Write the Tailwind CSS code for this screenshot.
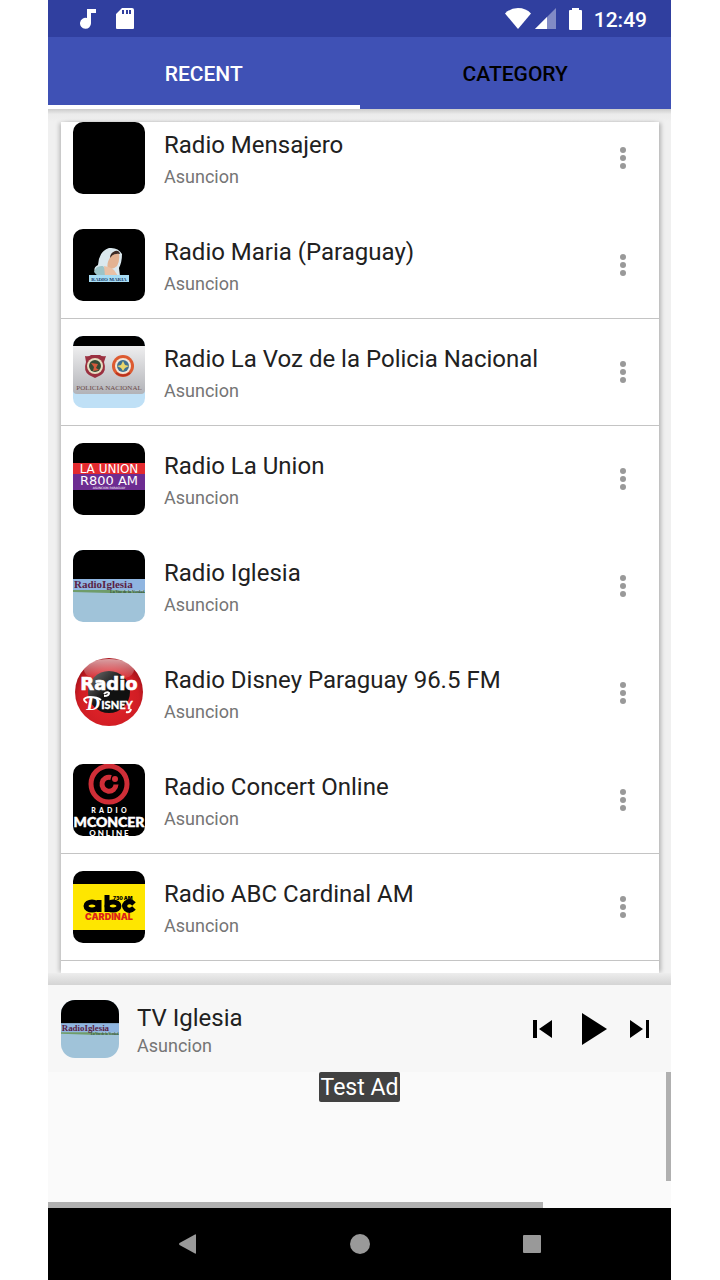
<!DOCTYPE html>
<html lang="en">
<head>
  <meta charset="UTF-8">
  <meta name="viewport" content="width=device-width, initial-scale=1.0">
  <title>Radio Paraguay</title>
  <script src="https://cdn.jsdelivr.net/npm/@tailwindcss/browser@4"></script>
</head>
<body class="bg-white font-['Roboto',sans-serif] text-[#212121]">

  <!-- Shared drawings -->
  <svg class="hidden">
    <symbol id="dots" viewBox="0 0 6 22">
      <circle cx="3" cy="3" r="3"/><circle cx="3" cy="11" r="3"/><circle cx="3" cy="19" r="3"/>
    </symbol>
    <symbol id="iglesia" viewBox="0 0 72 72">
      <rect width="72" height="72" fill="#a0c3d9"/>
      <rect width="72" height="29" fill="#000"/>
      <rect y="29" width="72" height="11" fill="#8fb5e0"/>
      <path d="M0 40h36l36 2v1H36L0 42z" fill="#6f9c6a"/>
      <text x="1" y="38" font-family="Liberation Serif, serif" font-weight="700" font-size="11" fill="#5a1f45">RadioIglesia</text>
      <text x="37" y="43" font-family="Liberation Serif, serif" font-weight="700" font-size="4" fill="#33553f">La Voz de la Verdad</text>
    </symbol>
  </svg>

  <div class="min-h-screen flex flex-col pl-12 pr-[49px]">

    <!-- Status bar -->
    <div class="h-[37px] bg-[#303f9f] flex items-center pl-8 pr-6 text-white">
      <svg class="w-4 h-5" viewBox="0 0 16 20" fill="currentColor"><path d="M7 0h9v4h-5v10a5.500 5.500 0 1 1-4-5z"/></svg>
      <svg class="w-[18px] h-[21px] ml-5" viewBox="0 0 18 21" fill="currentColor"><path fill-rule="evenodd" d="M6 0h10a2 2 0 0 1 2 2v18a1 1 0 0 1-1 1H1a1 1 0 0 1-1-1V6zM6 2v4h2V2zM10 2v4h2V2zM13 2v4h2V2z"/></svg>
      <svg class="w-[26px] h-[21px] ml-auto" viewBox="0 0 26 21" fill="currentColor"><path d="M13 21L0 5.500Q5 0 13 0t13 5.500z"/></svg>
      <svg class="w-[21px] h-[21px] ml-1" viewBox="0 0 21 21" fill="currentColor"><path d="M0 21L21 0v21z" opacity=".4"/><path d="M0 21L12 9v12z"/></svg>
      <svg class="w-[13px] h-[22px] ml-[13px]" viewBox="0 0 13 22" fill="currentColor"><path d="M3 2V0h7v2h2q1 0 1 1v18q0 1-1 1H1q-1 0-1-1V3q0-1 1-1z"/></svg>
      <span class="ml-3 pt-[2px] text-[21px] leading-6 font-medium">12:49</span>
    </div>

    <!-- Tabs -->
    <div class="h-[72px] bg-[#3f51b5] grid grid-cols-2 text-[21px] font-medium">
      <button class="text-white border-b-4 border-white pt-2">RECENT</button>
      <button class="text-black border-b-4 border-transparent pt-2">CATEGORY</button>
    </div>

    <!-- Stations -->
    <main class="flex-1 bg-[#f0f0f0] pl-[13px] pr-3 flex flex-col">
      <div class="h-[13px] -ml-[13px] -mr-3 bg-linear-to-b from-[#cccccc] via-[#ebebeb] via-40% to-[#f0f0f0]"></div>
      <ul class="flex-1 bg-white shadow-[3px_0_4px_-1px_rgba(0,0,0,0.25),-3px_0_4px_-1px_rgba(0,0,0,0.2)]">
        <li class="h-[90px] pl-3 pr-3 flex items-start gap-[19px]">
          <div class="size-[72px] shrink-0 rounded-[10px] bg-black"></div>
          <div class="flex-1 pt-[7px]">
            <h2 class="text-[24px] leading-8">Radio Mensajero</h2>
            <p class="mt-1 text-[18px] leading-6 text-[#757575]">Asuncion</p>
          </div>
          <button aria-label="More" class="w-12 h-[72px] flex items-center justify-center text-[#999]"><svg class="w-[6px] h-[22px]" fill="currentColor"><use href="#dots"/></svg></button>
        </li>
        <li class="h-[107px] pt-[17px] pl-3 pr-3 flex items-start gap-[19px] border-b border-[#c4c4c4]">
          <svg class="size-[72px] shrink-0 rounded-[10px]" viewBox="0 0 72 72">
            <rect width="72" height="72" fill="#000"/>
            <path d="M23 45q-4-6 2-9 1-14 11-17 9-1 13 6 0 8-3 14l1 8H26z" fill="#dbe8ee"/>
            <path d="M21 43q2-7 9-6l8 10H25z" fill="#9cc4c8"/>
            <path d="M38 27q4-4 8-2 1 7-2 12-4 4-9 3-2-6 3-13z" fill="#e3b292"/>
            <path d="M37 29q3-5 10-4-1-4-5-3-5 2-5 7z" fill="#3d2b25"/>
            <path d="M31 37q7 1 10 4l4 6H32z" fill="#e9c0a5"/>
            <rect x="16" y="46" width="40" height="7" fill="#a7dcf4"/>
            <text x="36" y="52" text-anchor="middle" font-family="Liberation Serif, serif" font-weight="700" font-size="5" fill="#173a66">RADIO MARIA</text>
          </svg>
          <div class="flex-1 pt-[7px]">
            <h2 class="text-[24px] leading-8">Radio Maria (Paraguay)</h2>
            <p class="mt-1 text-[18px] leading-6 text-[#757575]">Asuncion</p>
          </div>
          <button aria-label="More" class="w-12 h-[72px] flex items-center justify-center text-[#999]"><svg class="w-[6px] h-[22px]" fill="currentColor"><use href="#dots"/></svg></button>
        </li>
        <li class="h-[107px] pt-[17px] pl-3 pr-3 flex items-start gap-[19px] border-b border-[#c4c4c4]">
          <svg class="size-[72px] shrink-0 rounded-[10px]" viewBox="0 0 72 72">
            <defs><linearGradient id="steel" x1="0" y1="0" x2="0" y2="1"><stop offset="0" stop-color="#eeeeef"/><stop offset="1" stop-color="#b2b3b8"/></linearGradient></defs>
            <rect width="72" height="72" fill="#bfe0f6"/>
            <path d="M0 10h72v44q0 4-4 4H4q-4 0-4-4z" fill="url(#steel)"/>
            <rect width="72" height="10" fill="#000"/>
            <path d="M12 20q4 1 6-1h9q2 2 6 1l-2 6q3 9-3 13l-6 3-6-3q-6-4-3-13z" fill="#9b3040"/>
            <circle cx="22" cy="30" r="8" fill="#e6ddc0"/><circle cx="22" cy="30" r="6" fill="#354b35"/>
            <path d="M18 27l7 1-2 4 3 2-6 1 1-4z" fill="#d45b3c"/>
            <circle cx="50" cy="30" r="11" fill="#dd5a30"/><circle cx="50" cy="30" r="8" fill="#f1e7da"/><circle cx="50" cy="30" r="6" fill="#3f7191"/>
            <path d="M50 25l2 4 4 1-4 2-2 3-2-3-4-2 4-1z" fill="#e9d66c"/>
            <path d="M43 37q7 5 14 0" fill="none" stroke="#b8321f" stroke-width="2"/>
            <text x="36" y="54" text-anchor="middle" font-family="Liberation Serif, serif" font-size="7" fill="#6b4b48">POLICIA NACIONAL</text>
          </svg>
          <div class="flex-1 pt-[7px]">
            <h2 class="text-[24px] leading-8">Radio La Voz de la Policia Nacional</h2>
            <p class="mt-1 text-[18px] leading-6 text-[#757575]">Asuncion</p>
          </div>
          <button aria-label="More" class="w-12 h-[72px] flex items-center justify-center text-[#999]"><svg class="w-[6px] h-[22px]" fill="currentColor"><use href="#dots"/></svg></button>
        </li>
        <li class="h-[107px] pt-[17px] pl-3 pr-3 flex items-start gap-[19px]">
          <svg class="size-[72px] shrink-0 rounded-[10px]" viewBox="0 0 72 72">
            <rect width="72" height="72" fill="#000"/>
            <rect y="20" width="72" height="11" fill="#e32a2e"/>
            <rect y="31" width="72" height="16" fill="#6d2c91"/>
            <g text-anchor="middle" font-family="DejaVu Sans, sans-serif" fill="#fff">
              <text x="36" y="30" font-size="12">LA UNION</text>
              <text x="36" y="42" font-size="13">R800 AM</text>
              <text x="36" y="46" font-size="3">ASUNCION PARAGUAY</text>
            </g>
          </svg>
          <div class="flex-1 pt-[7px]">
            <h2 class="text-[24px] leading-8">Radio La Union</h2>
            <p class="mt-1 text-[18px] leading-6 text-[#757575]">Asuncion</p>
          </div>
          <button aria-label="More" class="w-12 h-[72px] flex items-center justify-center text-[#999]"><svg class="w-[6px] h-[22px]" fill="currentColor"><use href="#dots"/></svg></button>
        </li>
        <li class="h-[107px] pt-[17px] pl-3 pr-3 flex items-start gap-[19px]">
          <svg class="size-[72px] shrink-0 rounded-[10px]"><use href="#iglesia"/></svg>
          <div class="flex-1 pt-[7px]">
            <h2 class="text-[24px] leading-8">Radio Iglesia</h2>
            <p class="mt-1 text-[18px] leading-6 text-[#757575]">Asuncion</p>
          </div>
          <button aria-label="More" class="w-12 h-[72px] flex items-center justify-center text-[#999]"><svg class="w-[6px] h-[22px]" fill="currentColor"><use href="#dots"/></svg></button>
        </li>
        <li class="h-[107px] pt-[17px] pl-3 pr-3 flex items-start gap-[19px]">
          <svg class="size-[72px] shrink-0" viewBox="0 0 72 72">
            <defs>
              <radialGradient id="ball" cx=".5" cy=".6" r=".55"><stop offset="0" stop-color="#e8252b"/><stop offset=".8" stop-color="#d01d24"/><stop offset="1" stop-color="#a9131b"/></radialGradient>
              <linearGradient id="shine" x1="0" y1="0" x2="0" y2="1"><stop offset="0" stop-color="#fff" stop-opacity=".6"/><stop offset="1" stop-color="#fff" stop-opacity="0"/></linearGradient>
              <linearGradient id="core" x1="0" y1="0" x2="1" y2="1"><stop offset="0" stop-color="#777"/><stop offset=".5" stop-color="#111"/></linearGradient>
            </defs>
            <circle cx="36" cy="35" r="34" fill="url(#ball)"/>
            <ellipse cx="36" cy="13" rx="25" ry="11" fill="url(#shine)"/>
            <circle cx="36" cy="35" r="21" fill="url(#core)"/>
            <g text-anchor="middle" fill="#fff">
              <text x="36" y="33" font-family="DejaVu Sans, sans-serif" font-weight="700" font-size="18" stroke="#fff" stroke-width=".6">Radio</text>
              <text x="20" y="53" font-family="Liberation Serif, serif" font-style="italic" font-weight="700" font-size="19">D</text>
              <text x="44" y="52" font-family="Lato, sans-serif" font-weight="900" font-size="11" stroke="#fff" stroke-width=".3">ISNEY</text>
            </g>
            <path d="M14 46q-7-5 3-6 7 0 11 3M31 37q3-3 5-1 0 3-5 3M58 52q-1 4-5 3" fill="none" stroke="#fff" stroke-width="2"/>
          </svg>
          <div class="flex-1 pt-[7px]">
            <h2 class="text-[24px] leading-8">Radio Disney Paraguay 96.5 FM</h2>
            <p class="mt-1 text-[18px] leading-6 text-[#757575]">Asuncion</p>
          </div>
          <button aria-label="More" class="w-12 h-[72px] flex items-center justify-center text-[#999]"><svg class="w-[6px] h-[22px]" fill="currentColor"><use href="#dots"/></svg></button>
        </li>
        <li class="h-[107px] pt-[17px] pl-3 pr-3 flex items-start gap-[19px] border-b border-[#c4c4c4]">
          <svg class="size-[72px] shrink-0 rounded-[10px]" viewBox="0 0 72 72">
            <rect width="72" height="72" fill="#000"/>
            <circle cx="36" cy="20" r="18" fill="none" stroke="#cf2e37" stroke-width="5"/>
            <path d="M38 13.500a7 7 0 1 0 5 7" fill="none" stroke="#cf2e37" stroke-width="5"/>
            <circle cx="42" cy="15" r="3" fill="#cf2e37"/>
            <g text-anchor="middle" font-family="Lato, sans-serif" font-weight="900" fill="#fff">
              <text x="36" y="49" font-size="7" class="whitespace-pre">R  A  D  I  O</text>
              <text x="36" y="63" font-size="14" stroke="#fff" stroke-width=".5">MCONCER</text>
              <text x="36" y="72" font-size="8">O N L I N E</text>
            </g>
          </svg>
          <div class="flex-1 pt-[7px]">
            <h2 class="text-[24px] leading-8">Radio Concert Online</h2>
            <p class="mt-1 text-[18px] leading-6 text-[#757575]">Asuncion</p>
          </div>
          <button aria-label="More" class="w-12 h-[72px] flex items-center justify-center text-[#999]"><svg class="w-[6px] h-[22px]" fill="currentColor"><use href="#dots"/></svg></button>
        </li>
        <li class="h-[107px] pt-[17px] pl-3 pr-3 flex items-start gap-[19px] border-b border-[#c4c4c4]">
          <svg class="size-[72px] shrink-0 rounded-[10px]" viewBox="0 0 72 72">
            <rect width="72" height="72" fill="#000"/>
            <rect y="13" width="72" height="46" fill="#fee600"/>
            <text x="40" y="29" font-family="Inter, sans-serif" font-weight="900" font-size="5">730 AM</text>
            <g fill="none" stroke="#000" stroke-width="5">
              <ellipse cx="19" cy="35" rx="6" ry="4"/><path d="M26 29v12"/>
              <path d="M34 24v17"/><ellipse cx="40" cy="35" rx="6" ry="4"/>
              <path d="M61 33q-4-4-8-1-3 3 0 6 4 3 8-1"/>
            </g>
            <text x="36" y="49" text-anchor="middle" font-family="Inter, sans-serif" font-weight="900" font-size="9" fill="#dd2418">CARDINAL</text>
          </svg>
          <div class="flex-1 pt-[7px]">
            <h2 class="text-[24px] leading-8">Radio ABC Cardinal AM</h2>
            <p class="mt-1 text-[18px] leading-6 text-[#757575]">Asuncion</p>
          </div>
          <button aria-label="More" class="w-12 h-[72px] flex items-center justify-center text-[#999]"><svg class="w-[6px] h-[22px]" fill="currentColor"><use href="#dots"/></svg></button>
        </li>
      </ul>
    </main>
    <div class="h-3 bg-linear-to-b from-[#ededed] to-[#d4d4d4] relative"></div>

    <!-- Player -->
    <section class="h-[87px] bg-[#f7f7f7] pl-[13px] pr-[15px] flex items-center">
      <svg class="size-[58px] shrink-0 rounded-[14px]"><use href="#iglesia"/></svg>
      <div class="flex-1 ml-[18px] pt-[3px]">
        <h2 class="text-[24px] leading-8">TV Iglesia</h2>
        <p class="text-[18px] leading-6 text-[#757575]">Asuncion</p>
      </div>
      <button aria-label="Previous" class="mr-5"><svg class="size-8" viewBox="0 0 32 32"><path d="M6 7h4v18H6zM25 7v18L12 16z"/></svg></button>
      <button aria-label="Play" class="mr-[13px]"><svg class="size-8" viewBox="0 0 32 32"><path d="M3 0v32l25-16z"/></svg></button>
      <button aria-label="Next"><svg class="size-8" viewBox="0 0 32 32"><path d="M6 7v18l13-9zM22 7h3v18h-3z"/></svg></button>
    </section>

    <!-- Ad slot with its scroll bars -->
    <section class="h-[136px] bg-[#fafafa] relative text-center">
      <span class="inline-block h-[30px] px-[2px] rounded-[2px] bg-[#424242] text-white text-[23px] leading-8">Test Ad</span>
      <div class="absolute right-0 top-0 w-[5px] h-[109px] bg-[#b0b0b0]"></div>
      <div class="absolute left-0 bottom-0 w-[495px] h-[6px] bg-[#b0b0b0]"></div>
    </section>

    <!-- System navigation -->
    <nav class="h-[72px] bg-black pl-[54px] pr-[53px] grid grid-cols-3 text-[#999]">
      <button aria-label="Back" class="flex items-center justify-center"><svg class="size-5" viewBox="0 0 20 20" fill="currentColor"><path d="M18 1v18q0 1-1 .5L1.500 11q-1-1 0-2L17 .5q1-.5 1 .5z"/></svg></button>
      <button aria-label="Home" class="flex items-center justify-center"><svg class="size-5" viewBox="0 0 20 20" fill="currentColor"><circle cx="10" cy="10" r="10"/></svg></button>
      <button aria-label="Overview" class="flex items-center justify-center"><svg class="size-5" viewBox="0 0 20 20" fill="currentColor"><rect x="1" y="1" width="18" height="18" rx="1"/></svg></button>
    </nav>
  </div>
</body>
</html>
